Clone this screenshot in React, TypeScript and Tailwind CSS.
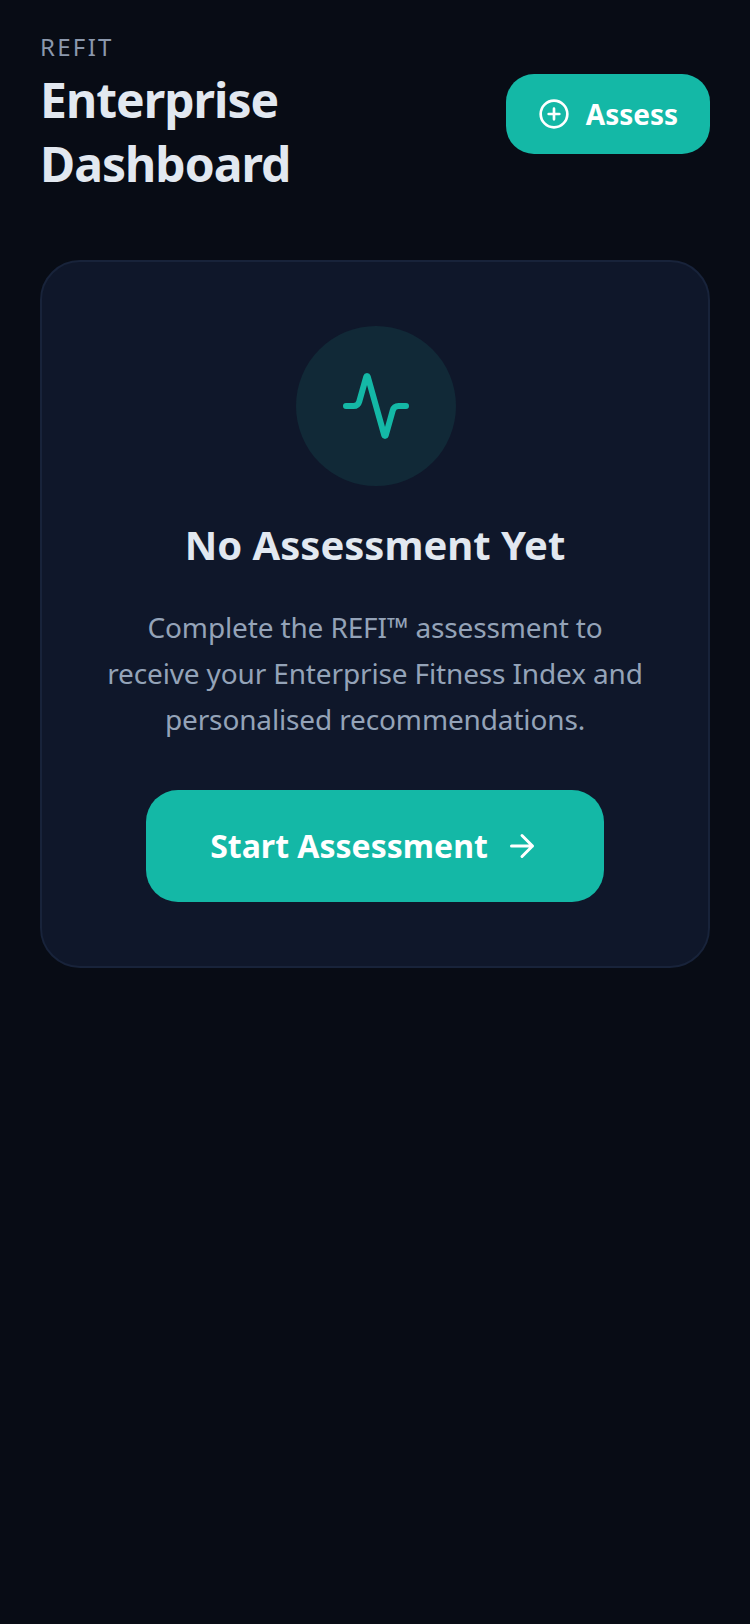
import React from "react";

export default function App() {
  return (
    <div className="min-h-[1624px] bg-[#080c15] px-10 pt-[31px] font-['Noto_Sans',sans-serif]">
      <header className="flex items-center justify-between">
        <div>
          <p className="text-2xl leading-[32px] tracking-[2.3px] text-[#8b98ad]">REFIT</p>
          <h1 className="mt-[5px] w-[300px] text-[48px] leading-[64px] font-bold tracking-[-0.96px] text-[#e2e8f0]">Enterprise Dashboard</h1>
        </div>
        <button className="flex h-20 w-[204px] items-center justify-center gap-4 rounded-[28px] bg-[#14b8a6] text-[28px] font-bold text-white">
          <svg width="32" height="32" viewBox="0 0 24 24" fill="none" stroke="currentColor" strokeWidth="2" strokeLinecap="round" strokeLinejoin="round">
            <circle cx="12" cy="12" r="10" />
            <path d="M8 12h8M12 8v8" />
          </svg>
          Assess
        </button>
      </header>
      <main className="mt-16 flex flex-col items-center rounded-[40px] border-2 border-[#18233a] bg-[#0f172a] px-14 pt-16 pb-16">
        <div className="ml-0.5 flex h-40 w-40 items-center justify-center rounded-full bg-[#112937]">
          <svg width="72" height="72" viewBox="0 0 24 24" fill="none" stroke="#14b8a6" strokeWidth="2" strokeLinecap="round" strokeLinejoin="round">
            <path d="M22 12h-2.48a2 2 0 0 0-1.93 1.46l-2.35 8.36a.25.25 0 0 1-.48 0L9.24 2.18a.25.25 0 0 0-.48 0l-2.35 8.36A2 2 0 0 1 4.49 12H2" />
          </svg>
        </div>
        <h2 className="mt-[33px] text-center text-[40px] leading-[52px] font-bold text-[#e2e8f0]">No Assessment Yet</h2>
        <p className="mt-[33px] text-center text-[28px] leading-[46px] tracking-[-0.14px] text-[#94a3b8]">
          Complete the REFI™ assessment to receive your Enterprise Fitness Index and personalised recommendations.
        </p>
        <button className="mt-12 flex h-28 w-[458px] items-center justify-center gap-4 rounded-[32px] bg-[#14b8a6] text-[32px] font-bold text-white">
          Start Assessment
          <svg width="36" height="36" viewBox="0 0 24 24" fill="none" stroke="currentColor" strokeWidth="2" strokeLinecap="round" strokeLinejoin="round">
            <path d="M5 12h14M12 5l7 7-7 7" />
          </svg>
        </button>
      </main>
    </div>
  );
}
